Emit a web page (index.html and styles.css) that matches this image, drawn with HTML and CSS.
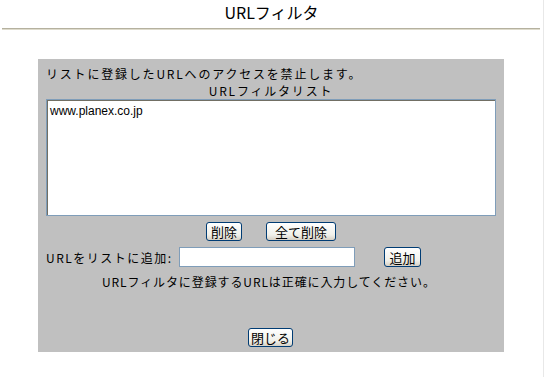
FILE: index.html
```html
<!DOCTYPE html>
<html lang="ja">
<head>
  <meta charset="UTF-8">
  <meta name="viewport" content="width=device-width, initial-scale=1.0">
  <title>URLフィルタ</title>
  <link rel="stylesheet" href="styles.css">
</head>
<body>
  <div class="page">
    <h1 class="title">URLフィルタ</h1>
    <hr class="rule">
    <form class="panel" id="filter-form">
      <p class="line">リストに登録したURLへのアクセスを禁止します。</p>
      <p class="line center">URLフィルタリスト</p>
      <textarea class="list" id="url_list">www.planex.co.jp</textarea>
      <div class="btn-row">
        <button type="button" class="btn btn-del">削除</button>
        <button type="button" class="btn btn-delall">全て削除</button>
      </div>
      <div class="add-row">
        <label for="new_url">URLをリストに追加:</label>
        <input type="text" id="new_url" class="url-input">
        <button type="button" class="btn btn-add">追加</button>
      </div>
      <p class="line note">URLフィルタに登録するURLは正確に入力してください。</p>
      <div class="close-row">
        <button type="button" class="btn btn-close">閉じる</button>
      </div>
    </form>
  </div>
</body>
</html>
```

FILE: styles.css
```css
body {
  margin: 0;
  background-color: #fff;
  font-family: "Noto Sans CJK JP", "Liberation Sans", sans-serif;
  color: #000;
}

.page {
  width: 543px;
  height: 377px;
  border-right: 1px solid #e8e8e8;
  overflow: hidden;
}

.title {
  margin: 0;
  font-size: 16px;
  font-weight: 400;
  line-height: 25px;
  text-align: center;
}

.rule {
  margin: 3px 0 0 2px;
  width: 538px;
  height: 0;
  border: none;
  border-top: 1px solid #b5b19f;
  border-bottom: 1px solid #dedbcc;
}

.panel {
  margin: 29px 0 0 38px;
  width: 466px;
  height: 293px;
  box-sizing: border-box;
  padding: 6px 8px 0 8px;
  background-color: #c0c0c0;
  display: flex;
  flex-direction: column;
}

.line {
  margin: 0;
  font-size: 12px;
  letter-spacing: 1.8px;
  line-height: 17px;
  white-space: nowrap;
}

.center {
  text-align: center;
}

.list {
  width: 450px;
  height: 117px;
  box-sizing: border-box;
  margin: 0;
  padding: 4px 3px;
  border: 1px solid #7f9db9;
  box-shadow: inset 1px 1px 0 #716f64;
  font-family: "Liberation Sans", sans-serif;
  font-size: 12px;
  resize: none;
  outline: none;
}

.btn {
  height: 19px;
  padding: 0;
  box-sizing: border-box;
  border: 1px solid #003c74;
  border-radius: 3px;
  background: linear-gradient(#ffffff, #f0f0ea 70%, #d6d0c5);
  font-family: "Noto Sans CJK JP", sans-serif;
  font-size: 13px;
  line-height: 17px;
  color: #000;
  cursor: pointer;
}

.btn-row {
  margin-top: 6px;
  display: flex;
  padding-left: 160px;
  gap: 24px;
}

.btn-del {
  width: 36px;
}

.btn-delall {
  width: 70px;
}

.add-row {
  margin-top: 6px;
  display: flex;
  align-items: center;
  height: 20px;
}

.add-row label {
  width: 133px;
  font-size: 12px;
  letter-spacing: 1.5px;
  white-space: nowrap;
}

.url-input {
  width: 176px;
  height: 20px;
  box-sizing: border-box;
  margin: 0;
  border: 1px solid #7f9db9;
  outline: none;
}

.btn-add {
  width: 37px;
  height: 20px;
  margin-left: 29px;
}

.note {
  margin-top: 6px;
  padding-left: 56px;
  letter-spacing: 0.9px;
}

.close-row {
  margin-top: 34px;
  padding-left: 202px;
}

.btn-close {
  width: 45px;
}
```
